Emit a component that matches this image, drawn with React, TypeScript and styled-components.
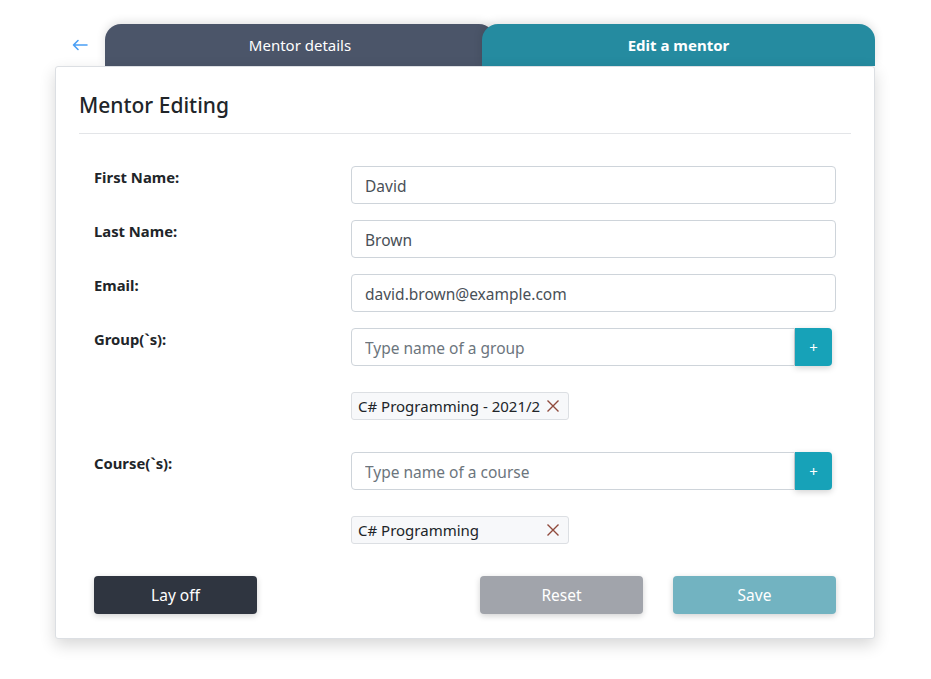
import React from "react";
import styled, { createGlobalStyle } from "styled-components";

const Global = createGlobalStyle`
  html, body { margin: 0; padding: 0; background: #ffffff; }
  body { font-family: "Noto Sans", "Open Sans", sans-serif; color: #212529; }
  * { box-sizing: border-box; }
`;

const Page = styled.div`
  padding: 24px 0 40px 55px;
  width: 931px;
`;

const Wrapper = styled.div`
  width: 820px;
  display: flex;
  flex-direction: column;
`;

const TabRow = styled.div`
  display: flex;
  align-items: stretch;
  height: 42px;
`;

const BackButton = styled.button`
  width: 50px;
  border: none;
  background: transparent;
  padding: 0;
  display: flex;
  align-items: center;
  justify-content: center;
  color: #4a9ff5;
  cursor: pointer;
`;

const Tab = styled.div<{ $active?: boolean; $w: number }>`
  width: ${(p) => p.$w}px;
  display: flex;
  align-items: center;
  justify-content: center;
  border-radius: 16px 16px 0 0;
  background: ${(p) => (p.$active ? "#258ba0" : "#4b5569")};
  color: #ffffff;
  font-size: 15px;
  font-weight: ${(p) => (p.$active ? 700 : 400)};
  margin-left: ${(p) => (p.$active ? "-13px" : "0")};
  position: relative;
  z-index: ${(p) => (p.$active ? 2 : 1)};
  box-shadow: 0 -2px 10px rgba(0, 0, 0, 0.12);
`;

const Card = styled.div`
  position: relative;
  z-index: 3;
  background: #ffffff;
  border: 1px solid #dcdfe3;
  border-radius: 3px;
  padding: 22px 23px 24px 23px;
  box-shadow: 0 6px 16px rgba(0, 0, 0, 0.16);
`;

const Title = styled.h2`
  margin: 0;
  font-size: 21px;
  font-weight: 500;
  line-height: 32px;
  color: #212529;
  padding-bottom: 12px;
  border-bottom: 1px solid #e3e5e8;
`;

const Form = styled.div`
  padding: 32px 15px 0 15px;
  display: flex;
  flex-direction: column;
`;

const Row = styled.div<{ $mb: number }>`
  display: grid;
  grid-template-columns: 257px 1fr;
  margin-bottom: ${(p) => p.$mb}px;
`;

const Label = styled.label`
  font-size: 14.8px;
  font-weight: 700;
  padding-top: 1px;
  color: #212529;
`;

const Field = styled.div`
  display: flex;
  flex-direction: column;
`;

const Input = styled.input`
  height: 38px;
  width: 100%;
  border: 1px solid #ced4da;
  border-radius: 4px;
  padding: 2px 13px 0 13px;
  font-family: inherit;
  font-size: 15.5px;
  color: #495057;
  background: #fff;
  outline: none;
  &::placeholder { color: #6c757d; }
`;

const InputGroup = styled.div`
  display: flex;
  width: 481px;
`;

const GroupInput = styled(Input)`
  flex: 1;
  border-radius: 4px 0 0 4px;
`;

const AddButton = styled.button`
  width: 37px;
  height: 38px;
  border: none;
  border-radius: 0 4px 4px 0;
  background: #17a2b8;
  color: #ffffff;
  font-size: 15px;
  font-family: inherit;
  box-shadow: 0 2px 6px rgba(0, 0, 0, 0.18);
  padding: 0;
  cursor: pointer;
`;

const ChipList = styled.div`
  margin-top: 26px;
  display: flex;
`;

const Chip = styled.div`
  width: 218px;
  height: 28px;
  display: flex;
  align-items: center;
  justify-content: space-between;
  padding: 0 8px 0 6px;
  background: #f7f8fa;
  border: 1px solid #dcdfe3;
  border-radius: 3px;
  font-size: 15px;
  color: #212529;
  white-space: nowrap;
`;

const ChipClose = styled.span`
  display: flex;
  align-items: center;
  color: #8f4a3c;
`;

const Actions = styled.div`
  display: flex;
  align-items: center;
  gap: 30px;
`;

const Spacer = styled.div`
  flex: 1;
`;

const ActionButton = styled.button<{ $bg: string }>`
  width: 163px;
  height: 38px;
  border: none;
  border-radius: 4px;
  background: ${(p) => p.$bg};
  color: #ffffff;
  font-family: inherit;
  font-size: 15.5px;
  box-shadow: 0 2px 6px rgba(0, 0, 0, 0.18);
  cursor: pointer;
`;

const Close = () => (
  <ChipClose>
    <svg width="14" height="14" viewBox="0 0 14 14" fill="none" stroke="currentColor" strokeWidth="1.4">
      <path d="M1.5 1.5 L12.5 12.5 M12.5 1.5 L1.5 12.5" />
    </svg>
  </ChipClose>
);

export default function App() {
  return (
    <>
      <Global />
      <Page>
        <Wrapper>
          <TabRow>
            <BackButton aria-label="back">
              <svg width="16" height="12" viewBox="0 0 16 12" fill="none" stroke="currentColor" strokeWidth="1.6" strokeLinecap="round" strokeLinejoin="round">
                <path d="M15 6 H1.5 M6 1.5 L1.5 6 L6 10.5" />
              </svg>
            </BackButton>
            <Tab $w={390}>Mentor details</Tab>
            <Tab $w={393} $active>Edit a mentor</Tab>
          </TabRow>
          <Card>
            <Title>Mentor Editing</Title>
            <Form>
              <Row $mb={16}>
                <Label>First Name:</Label>
                <Input defaultValue="David" />
              </Row>
              <Row $mb={16}>
                <Label>Last Name:</Label>
                <Input defaultValue="Brown" />
              </Row>
              <Row $mb={16}>
                <Label>Email:</Label>
                <Input defaultValue="david.brown@example.com" />
              </Row>
              <Row $mb={32}>
                <Label>Group(`s):</Label>
                <Field>
                  <InputGroup>
                    <GroupInput placeholder="Type name of a group" />
                    <AddButton>+</AddButton>
                  </InputGroup>
                  <ChipList>
                    <Chip>
                      <span>C# Programming - 2021/2</span>
                      <Close />
                    </Chip>
                  </ChipList>
                </Field>
              </Row>
              <Row $mb={32}>
                <Label>Course(`s):</Label>
                <Field>
                  <InputGroup>
                    <GroupInput placeholder="Type name of a course" />
                    <AddButton>+</AddButton>
                  </InputGroup>
                  <ChipList>
                    <Chip>
                      <span>C# Programming</span>
                      <Close />
                    </Chip>
                  </ChipList>
                </Field>
              </Row>
              <Actions>
                <ActionButton $bg="#2f3540">Lay off</ActionButton>
                <Spacer />
                <ActionButton $bg="#a1a4ab">Reset</ActionButton>
                <ActionButton $bg="#72b3c1">Save</ActionButton>
              </Actions>
            </Form>
          </Card>
        </Wrapper>
      </Page>
    </>
  );
}
